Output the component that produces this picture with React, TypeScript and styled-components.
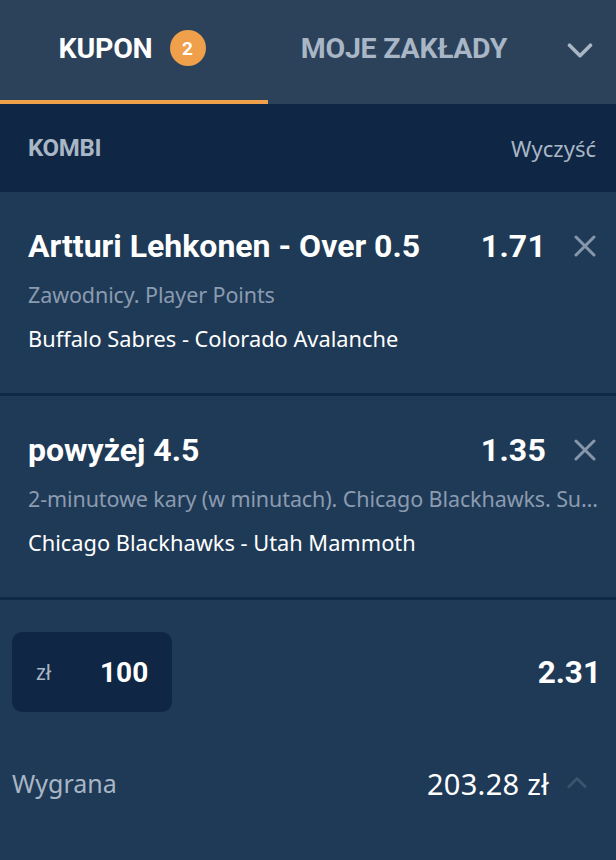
import React from "react";
import styled, { createGlobalStyle } from "styled-components";

const Global = createGlobalStyle`
  html, body { margin: 0; padding: 0; background: #1f3a56; }
  body { font-family: "Noto Sans", Roboto, sans-serif; -webkit-font-smoothing: antialiased; }
`;

const Page = styled.div`
  width: 616px;
  height: 860px;
  background: #1f3a56;
  display: flex;
  flex-direction: column;
  overflow: hidden;
`;

const TabBar = styled.div`
  height: 104px;
  background: #2b425a;
  display: flex;
  align-items: stretch;
`;

const Tab = styled.div<{ $active?: boolean; $w: number }>`
  width: ${(p) => p.$w}px;
  box-sizing: border-box;
  display: flex;
  align-items: center;
  justify-content: center;
  gap: 17px;
  padding-bottom: 4px;
  padding-right: ${(p) => (p.$active ? 4 : 0)}px;
  font-family: Roboto, sans-serif;
  font-weight: 700;
  font-size: 28.5px;
  letter-spacing: -0.2px;
  color: ${(p) => (p.$active ? "#ffffff" : "#a9b6c6")};
  border-bottom: 4px solid ${(p) => (p.$active ? "#f0a04b" : "transparent")};
`;

const Badge = styled.span`
  width: 36px;
  height: 36px;
  border-radius: 50%;
  background: #f0a04b;
  color: #fff;
  font-size: 19px;
  letter-spacing: 0;
  display: flex;
  align-items: center;
  justify-content: center;
`;

const TabIcon = styled.div`
  flex: 1;
  display: flex;
  align-items: center;
  justify-content: flex-end;
  padding-right: 22px;
  padding-bottom: 4px;
`;

const KombiBar = styled.div`
  height: 88px;
  background: #0f2744;
  display: flex;
  align-items: center;
  justify-content: space-between;
  padding: 0 20px 0 28px;
`;

const KombiLabel = styled.span`
  font-family: Roboto, sans-serif;
  font-weight: 700;
  font-size: 24px;
  color: #a9b6c6;
  letter-spacing: -0.3px;
`;

const ClearLink = styled.span`
  font-size: 22px;
  color: #a9b6c6;
`;

const Bet = styled.div`
  height: 204px;
  box-sizing: border-box;
  padding: 33px 20px 0 28px;
  border-bottom: 3px solid #0f2a46;
  display: flex;
  flex-direction: column;
`;

const BetHead = styled.div`
  display: flex;
  align-items: center;
  height: 42px;
`;

const BetTitle = styled.div`
  flex: 1;
  font-family: Roboto, sans-serif;
  font-weight: 700;
  font-size: 32px;
  letter-spacing: 0;
  color: #fff;
`;

const Odds = styled.div`
  font-family: Roboto, sans-serif;
  font-weight: 700;
  font-size: 32px;
  letter-spacing: 0.2px;
  color: #fff;
  margin-right: 28px;
`;

const CloseBtn = styled.div`
  width: 22px;
  height: 22px;
  display: flex;
  align-items: center;
  justify-content: center;
`;

const Market = styled.div`
  margin-top: 13px;
  margin-right: -4px;
  font-size: 21.5px;
  line-height: 30px;
  letter-spacing: -0.1px;
  color: #8b9bb0;
  white-space: nowrap;
  overflow: hidden;
  text-overflow: ellipsis;
`;

const Match = styled.div`
  margin-top: 14px;
  font-size: 21.8px;
  line-height: 30px;
  color: #fff;
`;

const StakeRow = styled.div`
  display: flex;
  align-items: center;
  justify-content: space-between;
  padding: 32px 15px 0 12px;
`;

const StakeBox = styled.div`
  width: 160px;
  height: 80px;
  border-radius: 10px;
  background: #0f2744;
  display: flex;
  align-items: center;
  box-sizing: border-box;
  padding-left: 24px;
`;

const Currency = styled.span`
  font-size: 21px;
  color: #a9b6c6;
  width: 64px;
`;

const StakeValue = styled.span`
  font-family: Roboto, sans-serif;
  font-weight: 700;
  font-size: 28px;
  color: #fff;
`;

const TotalOdds = styled.span`
  font-family: Roboto, sans-serif;
  font-weight: 700;
  font-size: 31.5px;
  color: #fff;
`;

const WinRow = styled.div`
  display: flex;
  align-items: center;
  height: 38px;
  padding: 52px 28px 0 12px;
`;

const WinLabel = styled.span`
  flex: 1;
  font-size: 25px;
  color: #a9b6c6;
`;

const WinValue = styled.span`
  font-size: 29px;
  letter-spacing: 0.3px;
  color: #fff;
  margin-right: 17px;
`;

const Chevron = ({ up, color, size }: { up?: boolean; color: string; size: number }) => (
  <svg width={size} height={size * 0.6} viewBox="0 0 26 16" fill="none">
    <path
      d={up ? "M3 13 L13 3 L23 13" : "M3 3 L13 13 L23 3"}
      stroke={color}
      strokeWidth="3.4"
      strokeLinecap="round"
      strokeLinejoin="round"
    />
  </svg>
);

const CloseIcon = () => (
  <svg width="22" height="22" viewBox="0 0 22 22">
    <path d="M2 2 L20 20 M20 2 L2 20" stroke="#8797ab" strokeWidth="3" strokeLinecap="round" />
  </svg>
);

const bets = [
  {
    title: "Artturi Lehkonen - Over 0.5",
    odds: "1.71",
    market: "Zawodnicy. Player Points",
    match: "Buffalo Sabres - Colorado Avalanche",
  },
  {
    title: "powyżej 4.5",
    odds: "1.35",
    market: "2-minutowe kary (w minutach). Chicago Blackhawks. Suma",
    match: "Chicago Blackhawks - Utah Mammoth",
  },
];

export default function App() {
  return (
    <Page>
      <Global />
      <TabBar>
        <Tab $active $w={268}>
          KUPON
          <Badge>2</Badge>
        </Tab>
        <Tab $w={272}>MOJE ZAKŁADY</Tab>
        <TabIcon>
          <Chevron color="#a9b6c6" size={28} />
        </TabIcon>
      </TabBar>
      <KombiBar>
        <KombiLabel>KOMBI</KombiLabel>
        <ClearLink>Wyczyść</ClearLink>
      </KombiBar>
      {bets.map((b) => (
        <Bet key={b.title}>
          <BetHead>
            <BetTitle>{b.title}</BetTitle>
            <Odds>{b.odds}</Odds>
            <CloseBtn>
              <CloseIcon />
            </CloseBtn>
          </BetHead>
          <Market>{b.market}</Market>
          <Match>{b.match}</Match>
        </Bet>
      ))}
      <StakeRow>
        <StakeBox>
          <Currency>zł</Currency>
          <StakeValue>100</StakeValue>
        </StakeBox>
        <TotalOdds>2.31</TotalOdds>
      </StakeRow>
      <WinRow>
        <WinLabel>Wygrana</WinLabel>
        <WinValue>203.28 zł</WinValue>
        <Chevron up color="#3b536d" size={22} />
      </WinRow>
    </Page>
  );
}
